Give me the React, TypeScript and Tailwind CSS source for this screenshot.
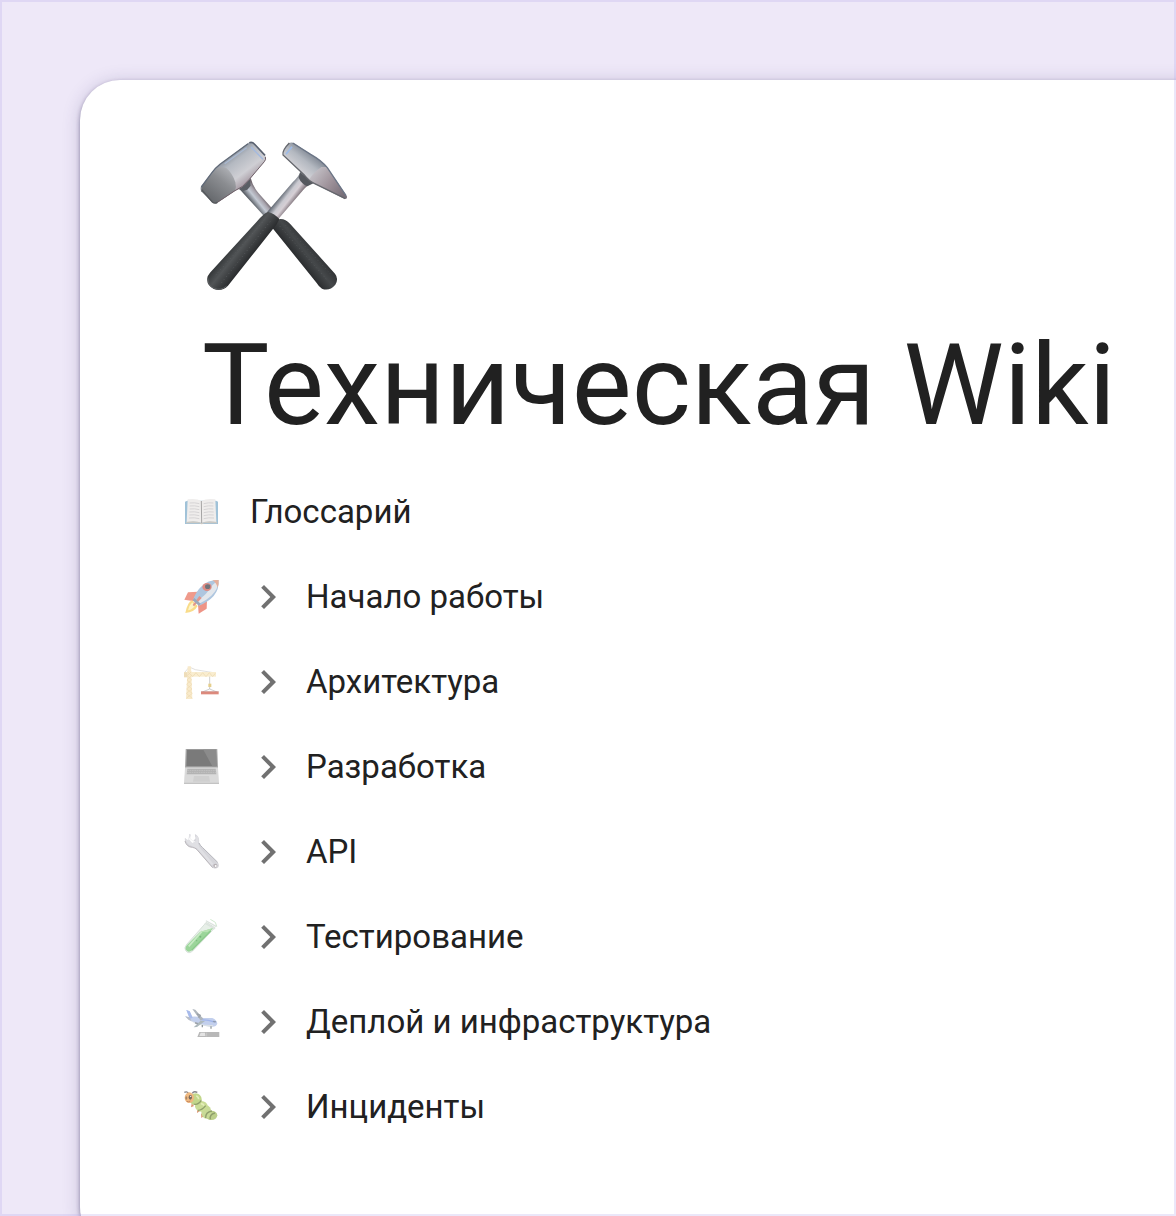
import React from 'react';

// big page icon, crossed hammers
const Hammers = () => (
  <svg viewBox="54 45 456 456" className="w-[152px] h-[152px]" aria-hidden="true">
    <defs>
      <linearGradient id="headLeft" gradientUnits="userSpaceOnUse" x1="150" y1="80" x2="215" y2="165">
        <stop offset="0" stopColor="#7f8793" />
        <stop offset="0.3" stopColor="#b4b9c1" />
        <stop offset="0.7" stopColor="#cfcfd4" />
        <stop offset="1" stopColor="#a79ba4" />
      </linearGradient>
      <linearGradient id="faceLeft" gradientUnits="userSpaceOnUse" x1="160" y1="125" x2="85" y2="220">
        <stop offset="0" stopColor="#b9bbc0" />
        <stop offset="0.45" stopColor="#8b8d91" />
        <stop offset="1" stopColor="#66696d" />
      </linearGradient>
      <linearGradient id="headRight" gradientUnits="userSpaceOnUse" x1="400" y1="85" x2="350" y2="150">
        <stop offset="0" stopColor="#7b838f" />
        <stop offset="0.4" stopColor="#b3b8c0" />
        <stop offset="0.8" stopColor="#d0d0d5" />
        <stop offset="1" stopColor="#9a949b" />
      </linearGradient>
      <linearGradient id="tipRight" gradientUnits="userSpaceOnUse" x1="400" y1="140" x2="490" y2="210">
        <stop offset="0" stopColor="#c3c0c6" />
        <stop offset="0.5" stopColor="#a0949c" />
        <stop offset="1" stopColor="#776e78" />
      </linearGradient>
      <linearGradient id="neckLeft" gradientUnits="userSpaceOnUse" x1="214" y1="232" x2="244" y2="208">
        <stop offset="0" stopColor="#5b6067" />
        <stop offset="0.45" stopColor="#c3c9d3" />
        <stop offset="0.75" stopColor="#a9a5ae" />
        <stop offset="1" stopColor="#6d646b" />
      </linearGradient>
      <linearGradient id="neckRight" gradientUnits="userSpaceOnUse" x1="308" y1="204" x2="344" y2="232">
        <stop offset="0" stopColor="#656c76" />
        <stop offset="0.35" stopColor="#c9c9d0" />
        <stop offset="0.6" stopColor="#d6cfd5" />
        <stop offset="1" stopColor="#73676e" />
      </linearGradient>
      <linearGradient id="gripLeft" gradientUnits="userSpaceOnUse" x1="150" y1="370" x2="200" y2="410">
        <stop offset="0" stopColor="#35383a" />
        <stop offset="0.4" stopColor="#515456" />
        <stop offset="1" stopColor="#2b2d2f" />
      </linearGradient>
      <linearGradient id="gripRight" gradientUnits="userSpaceOnUse" x1="350" y1="400" x2="400" y2="360">
        <stop offset="0" stopColor="#2b2d2f" />
        <stop offset="0.5" stopColor="#45484a" />
        <stop offset="1" stopColor="#303234" />
      </linearGradient>
    </defs>
    <path d="M178 192 Q200 178 212 158 Q218 184 236 205 L280 254 L260 282 Z" fill="url(#neckLeft)" />
    <path d="M176 192 L210 162 L212 182 L202 194 L190 198 Z" fill="#5a5e64" />
    <path d="M270 300 L290 284 Q312 276 330 296 L465 446 Q477 461 466 479 Q448 500 426 491 Q417 486 410 474 Z" fill="url(#gripRight)" />
    <path d="M300 304 L444 468" fill="none" stroke="#5d6062" strokeWidth="3" strokeDasharray="2 9" />
    <path d="M316 300 L456 452" fill="none" stroke="#525557" strokeWidth="3" strokeDasharray="2 9" />
    <path d="M208 52 Q217 49 224 56 L256 91 Q261 101 253 110 L208 164 Q188 190 165 197 L112 233 Q104 238 96 231 L64 199 Q58 191 64 183 L96 141 Q108 126 122 116 Z" fill="url(#headLeft)" />
    <path d="M64 185 L108 132 Q122 120 140 130 Q158 146 166 172 Q170 186 165 197 L112 233 Q104 238 96 231 L64 199 Z" fill="url(#faceLeft)" />
    <path d="M208 53 Q217 50 223 57 L255 91" fill="none" stroke="#596170" strokeWidth="5" />
    <path d="M204 56 L120 118 Q106 129 96 143 L64 186" fill="none" stroke="#616a78" strokeWidth="4" />
    <path d="M200 68 L134 116" fill="none" stroke="#a9b9d2" strokeWidth="4" />
    <path d="M213 66 L249 103" fill="none" stroke="#a3b9e0" strokeWidth="4" />
    <path d="M256 96 Q259 103 253 110 L208 163 Q188 189 165 197 L112 232" fill="none" stroke="#6f6069" strokeWidth="3" />
    <path d="M65 194 L97 231 Q104 237 112 232" fill="none" stroke="#55585c" strokeWidth="4" />
    <path d="M262 260 L338 172 Q356 154 362 140 L402 172 Q382 180 369 196 L290 288 Z" fill="url(#neckRight)" />
    <path d="M360 142 L402 174 L382 184 Q364 176 356 158Z" fill="#55585e" />
    <path d="M326 55 Q333 50 342 54 L392 88 Q424 106 442 128 L499 210 Q505 223 494 222 L404 176 Q386 167 372 149 L311 92 Q305 85 311 76 Z" fill="url(#headRight)" />
    <path d="M440 126 L500 214 Q503 222 494 221 L404 176 L388 164 Q396 146 424 126 Z" fill="url(#tipRight)" />
    <path d="M338 54 L392 88 Q424 106 442 128 L498 212" fill="none" stroke="#6b7586" strokeWidth="4" />
    <path d="M336 65 L318 88" fill="none" stroke="#9dbbe8" strokeWidth="5" />
    <path d="M328 54 Q306 76 309 90 L372 149 Q386 168 404 176 L496 221" fill="none" stroke="#65676d" strokeWidth="4" />
    <path d="M264 260 Q284 266 298 282 L290 298 L144 482 Q125 501 101 492 Q76 479 83 454 L90 443 L232 288 Q248 268 264 260 Z" fill="url(#gripLeft)" />
    <path d="M254 284 L104 454" fill="none" stroke="#5e6164" strokeWidth="3" strokeDasharray="2 9" />
    <path d="M270 290 L124 474" fill="none" stroke="#5e6164" strokeWidth="3" strokeDasharray="2 9" />
    <path d="M84 460 Q84 484 103 490 Q122 498 140 483" fill="none" stroke="#5c5f61" strokeWidth="3" />
  </svg>
);

const Book = () => (
  <svg viewBox="24 12 108 108" className="w-9 h-9" aria-hidden="true">
    <path d="M27 35 L34 32 L120 32 L126 35 L126 102 L27 102 Z" fill="#a0c2d8" />
    <path d="M35 28 Q62 24 76 33 Q92 24 118 28 L121 97 Q92 92 77 99 Q60 92 32 97 Z" fill="#efedec" />
    <path d="M30 96 Q60 91 77 99 Q92 91 123 96 L123 100 L84 100 Q77 106 70 100 L30 100 Z" fill="#c9c8c3" />
    <path d="M76 33 L77 99" stroke="#a5a4a4" strokeWidth="3" />
    <path d="M41 39 Q56 37 70 41 M41 48 Q56 46 70 50 M41 57 Q56 55 70 59 M40 66 Q56 64 70 68 M40 75 Q56 73 70 77 M39 84 Q56 82 70 86 M83 41 Q98 37 112 39 M83 50 Q98 46 112 48 M83 59 Q98 55 112 57 M83 68 Q98 64 113 66 M83 77 Q98 73 113 75 M83 86 Q98 82 114 84" fill="none" stroke="#d6d4d5" strokeWidth="3" />
  </svg>
);

const Rocket = () => (
  <svg viewBox="24 27 108 108" className="w-9 h-9" aria-hidden="true">
    <path d="M66 65 L36 67 L25 89 L54 94 Z" fill="#ef9a8b" />
    <path d="M93 89 L92 116 L68 131 L66 104 Z" fill="#ee9486" />
    <path d="M48 91 Q34 97 28 129 Q55 127 65 108 Z" fill="#f9dc8a" />
    <path d="M49 97 Q40 105 36 121 Q51 117 57 107 Z" fill="#fdf5c8" />
    <path d="M128 30 Q96 29 77 49 Q61 63 51 90 L69 107 Q97 96 113 78 Q130 58 128 30 Z" fill="#aec6df" />
    <path d="M128 30 Q127 58 106 77 Q90 92 69 101 L60 94 Q85 80 96 64 Q107 44 128 30 Z" fill="#e3e7ec" />
    <path d="M109 31 Q120 29 128 30 Q129 42 125 53 Q121 38 109 31 Z" fill="#e5b09b" />
    <path d="M77 84 L54 109 L50 105 L70 78 Z" fill="#e2968b" />
    <path d="M55 84 L74 101 L69 107 L50 91Z" fill="#9aa9ba" />
    <ellipse cx="93" cy="51" rx="14" ry="12" fill="#df8b83" />
    <ellipse cx="95" cy="50" rx="8" ry="7" fill="#707279" />
  </svg>
);

const Crane = () => (
  <svg viewBox="24 27 108 108" className="w-9 h-9" aria-hidden="true">
    <path d="M26 52 L40 36 L58 44 L112 53" fill="none" stroke="#d2d0cd" strokeWidth="2" />
    <path d="M24 51 H120 V65 H24 Z" fill="#f9edd0" />
    <path d="M30 65 L40 53 L50 65 L60 53 L70 65 L80 53 L90 65 L100 53 L110 65 L118 55" fill="none" stroke="#ecd8ae" strokeWidth="2" />
    <path d="M35 34 H45 L49 132 H30 Z" fill="#f8eacb" />
    <path d="M34 50 L47 62 L33 75 L48 88 L32 102 L49 115 L31 130 M46 50 L34 62 L47 75 L32 88 L48 102 L31 115 L49 130" fill="none" stroke="#eedab0" strokeWidth="2" />
    <path d="M24 52 H34 V67 H24 Z" fill="#eeddb9" />
    <path d="M101 65 V88" stroke="#b7b6b3" strokeWidth="2" />
    <path d="M97 86 H106 V96 H97 Z" fill="#e5ce8b" />
    <path d="M101 96 V102 L79 111 M101 102 L123 111" fill="none" stroke="#b4b5b6" strokeWidth="2" />
    <path d="M75 110 H128 V118 H75 Z" fill="#dd8a7d" />
    <path d="M75 110 H128" stroke="#c98880" strokeWidth="2" />
  </svg>
);

const Laptop = () => (
  <svg viewBox="24 27 108 108" className="w-9 h-9" aria-hidden="true">
    <path d="M31 26 H122 Q124 26 124 29 L126 83 H27 L29 29 Q29 26 31 26 Z" fill="#a6a6a6" />
    <path d="M33 29 H120 L122 79 H31 Z" fill="#7a7a7a" />
    <path d="M82 29 H120 L122 79 H109 Z" fill="#8b8b8b" />
    <path d="M27 83 H126 L129 130 H24 Z" fill="#dadada" />
    <path d="M34 86 H119 L121 103 H32 Z" fill="#b3b3b3" />
    <path d="M34 91 H120 M33 97 H121" stroke="#c9c9c9" strokeWidth="2" strokeDasharray="5 2" />
    <path d="M54 108 H99 L102 125 H51 Z" fill="#cfcfcf" />
    <path d="M24 130 H129" stroke="#b9b9b9" strokeWidth="3" />
  </svg>
);

const Wrench = () => (
  <svg viewBox="24 27 108 108" className="w-9 h-9" aria-hidden="true">
    <path d="M40 26 L44 29 L42 41 L51 49 L59 40 Q56 33 57 27 Q72 35 69 52 Q71 59 78 66 L125 112 Q131 119 127 127 Q119 134 110 128 L63 74 Q56 67 49 67 Q32 67 27 49 Q26 41 27 38 L38 50 L51 58 L58 48 L52 49 L41 39 Z" fill="#d6d6db" />
    <path d="M40 26 L43 29 L39 43 L49 54 L59 48 L61 31 Q72 39 66 54 L70 66 L112 116 L107 121 L63 70 Q53 65 43 61 Q31 55 28 42 L37 45 Z" fill="#e0e0e4" />
    <path d="M69 54 Q72 61 79 67 L125 112" fill="none" stroke="#b7b7bd" strokeWidth="3" />
    <path d="M27 48 Q32 66 49 67 Q58 68 63 74 L110 128" fill="none" stroke="#b9b5ba" strokeWidth="3" />
    <circle cx="118" cy="122" r="6" fill="#b7b1b5" />
    <circle cx="119" cy="123" r="3" fill="#ffffff" />
  </svg>
);

const TestTube = () => (
  <svg viewBox="24 27 108 108" className="w-9 h-9" aria-hidden="true">
    <path d="M91 37 L117 53 L50 123 Q38 134 29 122 Q23 114 32 103 Z" fill="#e7efe8" stroke="#ccd8ce" strokeWidth="2" />
    <path d="M72 66 L112 54 L49 120 Q38 130 31 121 Q25 114 34 104 Z" fill="#9bd59a" />
    <path d="M79 63 L38 109" stroke="#c8ebc4" strokeWidth="5" />
    <path d="M104 63 L47 121" stroke="#8bca8b" strokeWidth="4" />
    <circle cx="73" cy="80" r="3" fill="#76b67a" />
    <circle cx="62" cy="92" r="2" fill="#76b67a" />
    <path d="M72 65 L112 54 L94 67 Z" fill="#b8e2b3" />
    <path d="M91 33 L120 49 M88 40 L116 56" stroke="#dce3de" strokeWidth="4" strokeLinecap="round" />
    <path d="M103 28 L118 37 L122 49" fill="none" stroke="#d0e9cf" strokeWidth="3" />
  </svg>
);

const Plane = () => (
  <svg viewBox="24 27 108 108" className="w-9 h-9" aria-hidden="true">
    <path d="M31 45 L41 49 L49 65 Q64 64 82 69 L109 69 Q123 75 124 86 Q120 96 108 95 Q73 92 43 77 L28 65 L41 67 Z" fill="#c2cfed" />
    <path d="M31 45 L41 49 L50 68 L41 72 Z" fill="#a8bbeb" />
    <path d="M27 63 L40 67 L47 78 L38 75 Z" fill="#b9bec7" />
    <path d="M43 76 Q74 92 112 90 L108 96 Q74 93 51 82 Z" fill="#dbe1e6" />
    <path d="M49 42 L58 44 L83 73 L74 77 Z" fill="#afb6bd" />
    <path d="M73 78 L88 77 L63 96 L53 97 Z" fill="#aeb9bd" />
    <path d="M63 57 L72 61 L68 68 M57 83 L66 86" fill="none" stroke="#9ba1a9" strokeWidth="5" />
    <path d="M79 75 Q96 74 111 80" fill="none" stroke="#a0b5eb" strokeWidth="4" />
    <path d="M112 77 L121 79 L118 83 L110 81Z" fill="#8e9ab2" />
    <path d="M105 94 V101 M79 90 V97" stroke="#929a9e" strokeWidth="4" />
    <path d="M70 111 H130 V126 H64 Z" fill="#b8b8b8" />
    <path d="M74 113 H87 L88 123 H70 Z" fill="#e3e3e3" />
    <path d="M92 113 V124" stroke="#d0d0d0" strokeWidth="2" />
  </svg>
);

const Caterpillar = () => (
  <svg viewBox="24 27 108 108" className="w-9 h-9" aria-hidden="true">
    <path d="M25 37 Q34 32 39 43 M49 40 Q53 32 64 37" fill="none" stroke="#838285" strokeWidth="4" />
    <path d="M47 70 L45 82 L54 78 M64 85 L63 99 L72 93 M75 100 L76 114 L85 107" fill="#dc9673" />
    <ellipse cx="106" cy="106" rx="18" ry="14" fill="#bccf8b" />
    <ellipse cx="91" cy="96" rx="15" ry="20" fill="#c8da96" />
    <ellipse cx="76" cy="79" rx="19" ry="16" fill="#cadc96" />
    <ellipse cx="59" cy="58" rx="18" ry="18" fill="#c2d78b" />
    <path d="M53 72 Q64 77 76 61 M66 91 Q78 91 89 77 M89 114 Q88 96 108 93 M103 118 Q100 103 117 99" fill="none" stroke="#8f9f6c" strokeWidth="4" />
    <path d="M61 47 Q68 51 68 58 M75 71 Q82 72 84 77" fill="none" stroke="#e4edb9" strokeWidth="5" />
    <ellipse cx="40" cy="53" rx="14" ry="16" fill="#efb980" />
    <ellipse cx="43" cy="52" rx="5" ry="7" fill="#7b6a5c" />
    <circle cx="44" cy="49" r="2" fill="#ffffff" />
    <ellipse cx="31" cy="54" rx="3" ry="5" fill="#a98566" />
    <path d="M32 64 Q38 67 43 63" fill="none" stroke="#c58762" strokeWidth="3" />
  </svg>
);

const pages = [
  { title: 'Глоссарий', icon: <Book />, nested: false },
  { title: 'Начало работы', icon: <Rocket />, nested: true },
  { title: 'Архитектура', icon: <Crane />, nested: true },
  { title: 'Разработка', icon: <Laptop />, nested: true },
  { title: 'API', icon: <Wrench />, nested: true },
  { title: 'Тестирование', icon: <TestTube />, nested: true },
  { title: 'Деплой и инфраструктура', icon: <Plane />, nested: true },
  { title: 'Инциденты', icon: <Caterpillar />, nested: true },
];

const PageRow = ({ page }: { page: (typeof pages)[number] }) => (
  <li className="flex h-[85px] items-center">
    <span className="mr-7 shrink-0">{page.icon}</span>
    {page.nested && (
      <button type="button" aria-label={page.title} className="mr-4 h-10 w-10 shrink-0 text-[#717171]">
        <svg viewBox="2 2 20 20" className="w-10 h-10" fill="currentColor" aria-hidden="true">
          <path d="M10 6 8.59 7.41 13.17 12l-4.58 4.59L10 18l6-6z" />
        </svg>
      </button>
    )}
    <a href="#" className="pl-[2px] whitespace-nowrap text-[33px] leading-10">{page.title}</a>
  </li>
);

const App = () => {
  return (
    <div className="relative h-screen overflow-hidden bg-[#eee8f8] pl-20 pt-20 font-['Roboto',sans-serif] text-[#212121]">
      <main className="-mr-20 rounded-[40px] bg-white pl-[104px] pr-20 pt-[60px] pb-[98px] shadow-[0_2px_4px_rgba(40,30,80,0.45),0_2px_18px_rgba(60,50,110,0.22)]">
        <div className="ml-[14px]">
          <Hammers />
        </div>
        <h1 className="ml-[18px] mt-[34px] whitespace-nowrap text-[113px] leading-[120px]">Техническая Wiki</h1>
        <nav className="mt-[23px]">
          <ul>
            {pages.map((page) => (
              <PageRow key={page.title} page={page} />
            ))}
          </ul>
        </nav>
      </main>
      {/* frame over everything */}
      <div className="pointer-events-none absolute inset-0 border-2 border-[#beafeb]/30"></div>
    </div>
  );
};

export default App;
